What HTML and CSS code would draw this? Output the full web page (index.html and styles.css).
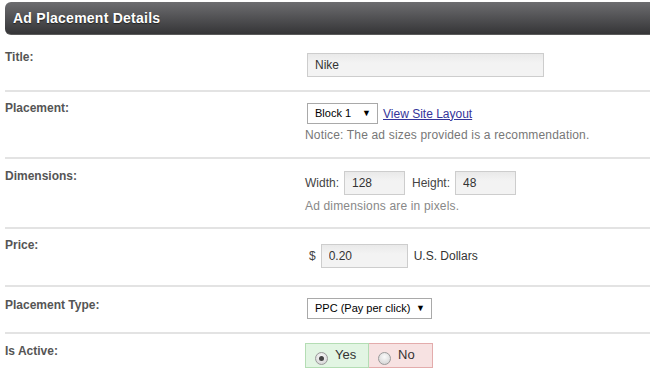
FILE: index.html
```html
<!DOCTYPE html>
<html lang="en">
<head>
  <meta charset="UTF-8">
  <title>Ad Placement Details</title>
  <link rel="stylesheet" href="styles.css">
</head>
<body>
  <div class="panel">
    <h2 class="panel-head">Ad Placement Details</h2>

    <!-- Title -->
    <div class="row row-title">
      <div class="label">Title:</div>
      <div class="value">
        <input class="field field-title" type="text" value="Nike">
      </div>
    </div>

    <!-- Placement -->
    <div class="row row-placement">
      <div class="label">Placement:</div>
      <div class="value">
        <div class="inline">
          <span class="select select-block">Block 1<span class="caret">&#9660;</span></span>
          <a href="#" class="link">View Site Layout</a>
        </div>
        <p class="hint">Notice: The ad sizes provided is a recommendation.</p>
      </div>
    </div>

    <!-- Dimensions -->
    <div class="row">
      <div class="label">Dimensions:</div>
      <div class="value">
        <div class="inline">
          <span class="text">Width:</span>
          <input class="field field-small" type="text" value="128">
          <span class="text">Height:</span>
          <input class="field field-small" type="text" value="48">
        </div>
        <p class="hint hint-dims">Ad dimensions are in pixels.</p>
      </div>
    </div>

    <!-- Price -->
    <div class="row row-price">
      <div class="label">Price:</div>
      <div class="value">
        <div class="inline">
          <span class="text dollar">$</span>
          <input class="field field-price" type="text" value="0.20">
          <span class="text dark">U.S. Dollars</span>
        </div>
      </div>
    </div>

    <!-- Placement type -->
    <div class="row row-type">
      <div class="label">Placement Type:</div>
      <div class="value">
        <span class="select select-type">PPC (Pay per click)<span class="caret">&#9660;</span></span>
      </div>
    </div>

    <!-- Is active -->
    <div class="row row-active">
      <div class="label">Is Active:</div>
      <div class="value">
        <div class="toggle">
          <label class="opt opt-yes"><span class="radio checked"></span>Yes</label>
          <label class="opt opt-no"><span class="radio"></span>No</label>
        </div>
      </div>
    </div>
  </div>
</body>
</html>
```

FILE: styles.css
```css
/* Global */
body {
  margin: 0;
  font-family: "Liberation Sans", Arial, sans-serif;
  font-size: 12px;
  color: #444;
  background: #fff;
  overflow: hidden;
}

.panel {
  width: 700px;
  margin: 2px 0 0 5px;
}

/* Header bar */
.panel-head {
  margin: 0;
  height: 32px;
  line-height: 32px;
  padding-left: 8px;
  font-size: 14px;
  font-weight: bold;
  letter-spacing: 0.25px;
  color: #fff;
  text-shadow: 0 1px 1px #222;
  background: linear-gradient(#6d6d70, #353537);
  border-bottom: 1px solid #5a5a5a;
  border-radius: 6px 0 0 6px;
}

/* Rows */
.row {
  display: grid;
  grid-template-columns: 300px 1fr;
  align-items: start;
  padding: 12px 0 13px;
  border-bottom: 2px solid #e3e3e3;
}

.label {
  font-weight: bold;
  color: #555;
  line-height: 15px;
  margin-top: -2px;
}

.row-title .label {
  margin-top: 3px;
}

.row-title .value {
  margin-top: 6px;
}

.row-placement {
  padding: 11px 0 14px;
}

.row-price {
  padding-bottom: 17px;
}

.row-price .label {
  margin-top: -3px;
}

.row-price .value {
  margin-top: 3px;
}

.row-type {
  padding: 11px 0 13px;
}

.row-type .label {
  margin-top: 0;
}

.row-active {
  padding-top: 9px;
  border-bottom: none;
}

.row-active .label {
  margin-top: 1px;
}

.inline {
  display: flex;
  align-items: center;
}

.text {
  color: #444;
  margin-right: 5px;
}

.dollar {
  margin-left: 4px;
}

.dark {
  color: #333;
  margin-left: 6px;
}

/* Text fields */
.field {
  box-sizing: border-box;
  height: 24px;
  padding: 0 7px;
  font-family: inherit;
  font-size: 12px;
  color: #333;
  border: 1px solid #cdcdcd;
  background: linear-gradient(#e9e9e9, #f3f3f3 40%, #f3f3f3);
  outline: none;
}

.field-title {
  width: 237px;
  margin-left: 2px;
}

.field-small {
  width: 61px;
  margin-right: 7px;
}

.field-price {
  width: 87px;
}

/* Fake selects */
.select {
  position: relative;
  box-sizing: border-box;
  display: inline-block;
  height: 21px;
  line-height: 19px;
  padding-left: 7px;
  margin-left: 2px;
  font-size: 11px;
  color: #000;
  border: 1px solid #a9a9a9;
  background: #fff;
}

.select-block {
  width: 71px;
}

.select-type {
  width: 125px;
}

.caret {
  position: absolute;
  right: 6px;
  top: 0;
  font-size: 9px;
}

.link {
  margin-left: 5px;
  color: #34349a;
  text-decoration: underline;
}

.hint {
  margin: 4px 0 0;
  line-height: 15px;
  letter-spacing: 0.17px;
  color: #777;
}

.hint-dims {
  color: #888;
}

/* Yes / No toggle */
.toggle {
  display: flex;
}

.opt {
  box-sizing: border-box;
  display: flex;
  align-items: flex-start;
  height: 25px;
  padding: 3px 0 0 9px;
  font-size: 13px;
  color: #333;
}

.opt-yes {
  width: 64px;
  background: #e2f5e3;
  border: 1px solid #b4ddb4;
}

.opt-no {
  width: 64px;
  background: #f7e2e2;
  border: 1px solid #e3acac;
  border-left: none;
}

.radio {
  box-sizing: border-box;
  width: 13px;
  height: 13px;
  margin: 5px 7px 0 0;
  border: 1px solid #9a9a9a;
  border-radius: 50%;
  background: radial-gradient(circle at 50% 35%, #fafafa, #cfcfcf);
  position: relative;
}

.radio.checked::after {
  content: "";
  position: absolute;
  left: 3px;
  top: 3px;
  width: 5px;
  height: 5px;
  border-radius: 50%;
  background: #444;
}
```
